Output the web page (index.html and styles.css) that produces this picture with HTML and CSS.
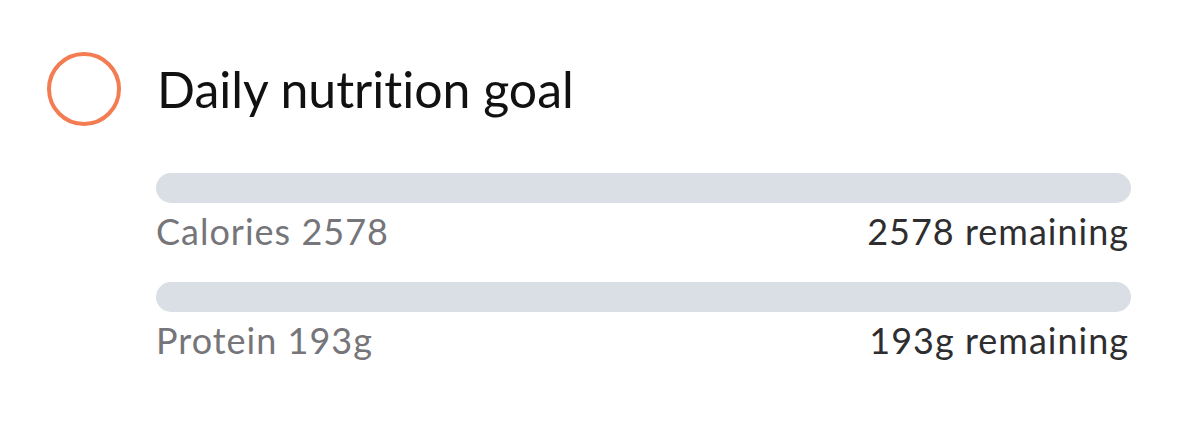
FILE: index.html
```html
<!DOCTYPE html>
<html>
<head>
<meta charset="utf-8">
<link rel="stylesheet" href="styles.css">
</head>
<body>
<div class="card">
  <div class="header">
    <div class="ring"></div>
    <h1 class="title">Daily nutrition goal</h1>
  </div>
  <div class="goals">
    <div class="goal">
      <div class="bar"><div class="fill" style="width:0%"></div></div>
      <div class="row"><span class="label">Calories 2578</span><span class="remain">2578 remaining</span></div>
    </div>
    <div class="goal">
      <div class="bar"><div class="fill" style="width:0%"></div></div>
      <div class="row"><span class="label">Protein 193g</span><span class="remain">193g remaining</span></div>
    </div>
  </div>
</div>
</body>
</html>
```
FILE: styles.css
```css
html, body { margin: 0; padding: 0; background: #ffffff; }
body { font-family: Lato, "Open Sans", sans-serif; width: 1179px; height: 430px; overflow: hidden; font-variant-ligatures: none; }
.card { padding: 52px 51px 0 47px; }
.header { display: flex; align-items: center; gap: 36px; }
.ring { width: 66px; height: 66px; border: 4px solid #f47c52; border-radius: 50%; flex: none; }
.title { margin: 0; font-weight: 400; font-size: 50px; color: #111; line-height: 72px; }
.goals { margin-left: 109px; margin-top: 47px; display: flex; flex-direction: column; gap: 25px; }
.bar { height: 30px; border-radius: 15px; background: #dadee5; overflow: hidden; margin-right: -3px; }
.fill { height: 100%; background: #f47c52; }
.row { display: flex; justify-content: space-between; font-size: 36px; line-height: 52px; height: 52px; padding-top: 2px; letter-spacing: 1px; }
.label { color: #75757a; }
.remain { color: #2e2e30; margin-right: -1px; }
```
